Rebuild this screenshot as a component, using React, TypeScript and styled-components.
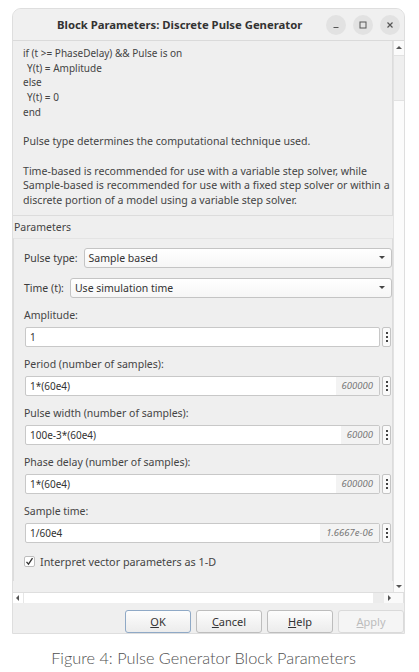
import React from "react";
import styled, { createGlobalStyle } from "styled-components";

const GlobalStyle = createGlobalStyle`
  html, body {
    margin: 0;
    padding: 0;
    background: #ffffff;
  }
  body {
    font-family: "Noto Sans", "Open Sans", sans-serif;
    color: #3c3c3c;
  }
`;

const Page = styled.div`
  width: 419px;
  height: 672px;
  padding: 8px 0 0 12px;
  box-sizing: border-box;
  overflow: hidden;
`;

const Window = styled.div`
  width: 393px;
  height: 626px;
  background: #efefef;
  border: 1px solid #dedede;
  border-radius: 9px 9px 0 0;
  box-sizing: border-box;
  display: flex;
  flex-direction: column;
  overflow: hidden;
`;

const TitleBar = styled.div`
  height: 31px;
  flex: none;
  display: flex;
  align-items: center;
  background: #f0f0f0;
  border-bottom: 1px solid #dadada;
  padding: 0 4px 0 44px;
`;

const Title = styled.div`
  flex: 1;
  min-width: 0;
  font-size: 11.3px;
  font-weight: 700;
  color: #333;
  white-space: nowrap;
`;

const TitleButtons = styled.div`
  display: flex;
  flex: none;
  gap: 7px;
`;

const RoundButton = styled.div`
  flex: none;
  width: 20px;
  height: 20px;
  border-radius: 50%;
  background: #e2e2e2;
  display: flex;
  align-items: center;
  justify-content: center;
  color: #555;
`;

const Main = styled.div`
  flex: none;
  height: 551px;
  display: flex;
`;

const Viewport = styled.div`
  flex: 1;
  overflow: hidden;
`;

const DescBox = styled.div`
  width: 380px;
  border-right: 1px solid #dcdcdc;
  border-bottom: 1px solid #dcdcdc;
  padding: 5px 0 7px 10px;
  box-sizing: border-box;
  font-size: 10.6px;
  line-height: 14.7px;
  color: #444;
  white-space: nowrap;
`;

const Line = styled.div<{ $indent?: boolean; $code?: boolean }>`
  padding-left: ${(p) => (p.$indent ? "4px" : "0")};
  font-size: ${(p) => (p.$code ? "10px" : "inherit")};
  min-height: 14.7px;
`;

const SectionTitle = styled.div`
  font-size: 10.5px;
  line-height: 22px;
  padding-left: 1px;
  color: #444;
`;

const Group = styled.div`
  width: 380px;
  border-left: 1px solid #dcdcdc;
  border-right: 1px solid #dcdcdc;
  border-top: 1px solid #e4e4e4;
  box-sizing: border-box;
  padding: 9px 0 12px 10px;
  display: flex;
  flex-direction: column;
`;

const ComboRow = styled.div`
  display: flex;
  align-items: center;
  gap: 6px;
  margin-bottom: 10px;
  font-size: 10.5px;
`;

const Combo = styled.div`
  flex: 1;
  height: 20px;
  box-sizing: border-box;
  border: 1px solid #c4c4c4;
  border-radius: 3px;
  background: linear-gradient(#ffffff, #f6f6f6);
  display: flex;
  align-items: center;
  justify-content: space-between;
  padding: 0 6px 0 4px;
  color: #333;
`;

const Caret = styled.span`
  width: 0;
  height: 0;
  border-left: 3px solid transparent;
  border-right: 3px solid transparent;
  border-top: 3px solid #444;
`;

const FieldLabel = styled.div`
  font-size: 10.5px;
  line-height: 15px;
  margin-bottom: 4px;
  color: #444;
`;

const InputRow = styled.div`
  display: flex;
  gap: 2px;
  margin: 0 0 10px 1px;
`;

const Input = styled.div`
  flex: 1;
  height: 20px;
  box-sizing: border-box;
  border: 1px solid #c8c8c8;
  border-radius: 2px;
  background: #ffffff;
  display: flex;
  align-items: center;
  font-size: 10px;
  color: #333;
  overflow: hidden;
`;

const InputText = styled.span`
  flex: 1;
  padding-left: 4px;
`;

const Evaluated = styled.span`
  align-self: stretch;
  display: flex;
  align-items: center;
  padding: 0 6px;
  background: #f3f3f3;
  font-style: italic;
  font-size: 9.5px;
  color: #777;
`;

const MenuButton = styled.div`
  width: 9px;
  height: 20px;
  box-sizing: border-box;
  border: 1px solid #c4c4c4;
  border-radius: 2px;
  background: #fafafa;
  display: flex;
  flex-direction: column;
  align-items: center;
  justify-content: center;
  gap: 2px;
  margin-right: 1px;
`;

const Dot = styled.span`
  width: 2px;
  height: 2px;
  background: #444;
`;

const CheckRow = styled.div`
  display: flex;
  align-items: center;
  gap: 5px;
  font-size: 10.8px;
  color: #444;
  margin-top: 1px;
`;

const CheckBox = styled.div`
  width: 11px;
  height: 11px;
  box-sizing: border-box;
  border: 1px solid #bdbdbd;
  background: #fff;
  border-radius: 2px;
  display: flex;
  align-items: center;
  justify-content: center;
`;

const VScroll = styled.div`
  width: 11px;
  flex: none;
  background: #fbfbfb;
  border-left: 1px solid #e2e2e2;
  display: flex;
  flex-direction: column;
  align-items: center;
  justify-content: space-between;
  padding: 5px 0 4px;
  box-sizing: border-box;
  position: relative;
`;

const VThumb = styled.div`
  position: absolute;
  top: 14px;
  left: 0;
  right: 0;
  height: 44px;
  background: #efefef;
  border-top: 1px solid #e2e2e2;
  border-bottom: 1px solid #e2e2e2;
`;

const Arrow = styled.span<{ $dir: "up" | "down" | "left" | "right" }>`
  width: 0;
  height: 0;
  position: relative;
  ${(p) =>
    p.$dir === "up"
      ? "border-left: 3px solid transparent; border-right: 3px solid transparent; border-bottom: 3px solid #555;"
      : p.$dir === "down"
      ? "border-left: 3px solid transparent; border-right: 3px solid transparent; border-top: 3px solid #555;"
      : p.$dir === "left"
      ? "border-top: 3px solid transparent; border-bottom: 3px solid transparent; border-right: 3px solid #555;"
      : "border-top: 3px solid transparent; border-bottom: 3px solid transparent; border-left: 3px solid #555;"}
`;

const HScroll = styled.div`
  flex: none;
  height: 11px;
  display: flex;
  align-items: center;
  background: #ffffff;
  border-top: 1px solid #dedede;
  padding: 0 0 0 3px;
  box-sizing: border-box;
`;

const HTrack = styled.div`
  flex: 1;
  align-self: stretch;
  margin-left: 4px;
  border-left: 1px solid #e6e6e6;
`;

const HThumb = styled.div`
  width: 11px;
  align-self: stretch;
  background: #ececec;
`;

const HEnd = styled.div`
  width: 20px;
  align-self: stretch;
  display: flex;
  align-items: center;
  padding-left: 4px;
  box-sizing: border-box;
  border-right: 1px solid #e2e2e2;
  background: #fafafa;
`;

const ButtonBar = styled.div`
  flex: 1;
  display: flex;
  justify-content: flex-end;
  align-items: flex-start;
  gap: 5px;
  padding: 7px 0 0;
`;

const DialogButton = styled.div<{ $default?: boolean; $disabled?: boolean }>`
  width: 66px;
  height: 23px;
  box-sizing: border-box;
  border: 1px solid
    ${(p) => (p.$default ? "#8fa9c6" : p.$disabled ? "#dadada" : "#bdbdbd")};
  border-radius: 3px;
  background: ${(p) =>
    p.$disabled ? "#f5f5f5" : "linear-gradient(#fdfdfd, #ececec)"};
  display: flex;
  align-items: center;
  justify-content: center;
  font-size: 11px;
  color: ${(p) => (p.$disabled ? "#bcbcbc" : "#333")};
  u {
    text-decoration: underline;
  }
`;

const Caption = styled.div`
  width: 407px;
  text-align: center;
  margin-top: 14px;
  margin-left: -12px;
  font-family: Lato, "Open Sans", sans-serif;
  font-weight: 300;
  font-size: 16.3px;
  color: #505050;
`;

type FieldProps = { label: string; value: string; evaluated?: string };

const Field = ({ label, value, evaluated }: FieldProps) => (
  <>
    <FieldLabel>{label}</FieldLabel>
    <InputRow>
      <Input>
        <InputText>{value}</InputText>
        {evaluated && <Evaluated>{evaluated}</Evaluated>}
      </Input>
      <MenuButton>
        <Dot />
        <Dot />
        <Dot />
      </MenuButton>
    </InputRow>
  </>
);

export default function App() {
  return (
    <>
      <GlobalStyle />
      <Page>
        <Window>
          <TitleBar>
            <Title>Block Parameters: Discrete Pulse Generator</Title>
            <TitleButtons>
              <RoundButton>
                <svg width="8" height="8" viewBox="0 0 8 8">
                  <path d="M1.5 6.5h5" stroke="#555" strokeWidth="1.2" />
                </svg>
              </RoundButton>
              <RoundButton>
                <svg width="8" height="8" viewBox="0 0 8 8">
                  <rect x="1" y="1" width="6" height="6" fill="none" stroke="#555" strokeWidth="1" />
                </svg>
              </RoundButton>
              <RoundButton>
                <svg width="8" height="8" viewBox="0 0 8 8">
                  <path d="M1.5 1.5l5 5M6.5 1.5l-5 5" stroke="#555" strokeWidth="1.2" />
                </svg>
              </RoundButton>
            </TitleButtons>
          </TitleBar>

          <Main>
            <Viewport>
              <DescBox>
                <Line $code>if (t &gt;= PhaseDelay) &amp;&amp; Pulse is on</Line>
                <Line $code $indent>Y(t) = Amplitude</Line>
                <Line $code>else</Line>
                <Line $code $indent>Y(t) = 0</Line>
                <Line $code>end</Line>
                <Line />
                <Line>Pulse type determines the computational technique used.</Line>
                <Line />
                <Line>Time-based is recommended for use with a variable step solver, while</Line>
                <Line>Sample-based is recommended for use with a fixed step solver or within a</Line>
                <Line>discrete portion of a model using a variable step solver.</Line>
              </DescBox>
              <SectionTitle>Parameters</SectionTitle>
              <Group>
                <ComboRow>
                  Pulse type:
                  <Combo>
                    Sample based
                    <Caret />
                  </Combo>
                </ComboRow>
                <ComboRow>
                  Time (t):
                  <Combo>
                    Use simulation time
                    <Caret />
                  </Combo>
                </ComboRow>
                <Field label="Amplitude:" value="1" />
                <Field label="Period (number of samples):" value="1*(60e4)" evaluated="600000" />
                <Field label="Pulse width (number of samples):" value="100e-3*(60e4)" evaluated="60000" />
                <Field label="Phase delay (number of samples):" value="1*(60e4)" evaluated="600000" />
                <Field label="Sample time:" value="1/60e4" evaluated="1.6667e-06" />
                <CheckRow>
                  <CheckBox>
                    <svg width="9" height="9" viewBox="0 0 9 9">
                      <path d="M1.5 4.8l2 2.4 4-6" fill="none" stroke="#333" strokeWidth="1.3" />
                    </svg>
                  </CheckBox>
                  Interpret vector parameters as 1-D
                </CheckRow>
              </Group>
            </Viewport>
            <VScroll>
              <VThumb />
              <Arrow $dir="up" />
              <Arrow $dir="down" />
            </VScroll>
          </Main>

          <HScroll>
            <Arrow $dir="left" />
            <HTrack />
            <HThumb />
            <HEnd>
              <Arrow $dir="right" />
            </HEnd>
          </HScroll>

          <ButtonBar>
            <DialogButton $default>
              <span><u>O</u>K</span>
            </DialogButton>
            <DialogButton>
              <span><u>C</u>ancel</span>
            </DialogButton>
            <DialogButton>
              <span><u>H</u>elp</span>
            </DialogButton>
            <DialogButton $disabled>
              <span><u>A</u>pply</span>
            </DialogButton>
          </ButtonBar>
        </Window>
        <Caption>Figure 4: Pulse Generator Block Parameters</Caption>
      </Page>
    </>
  );
}
